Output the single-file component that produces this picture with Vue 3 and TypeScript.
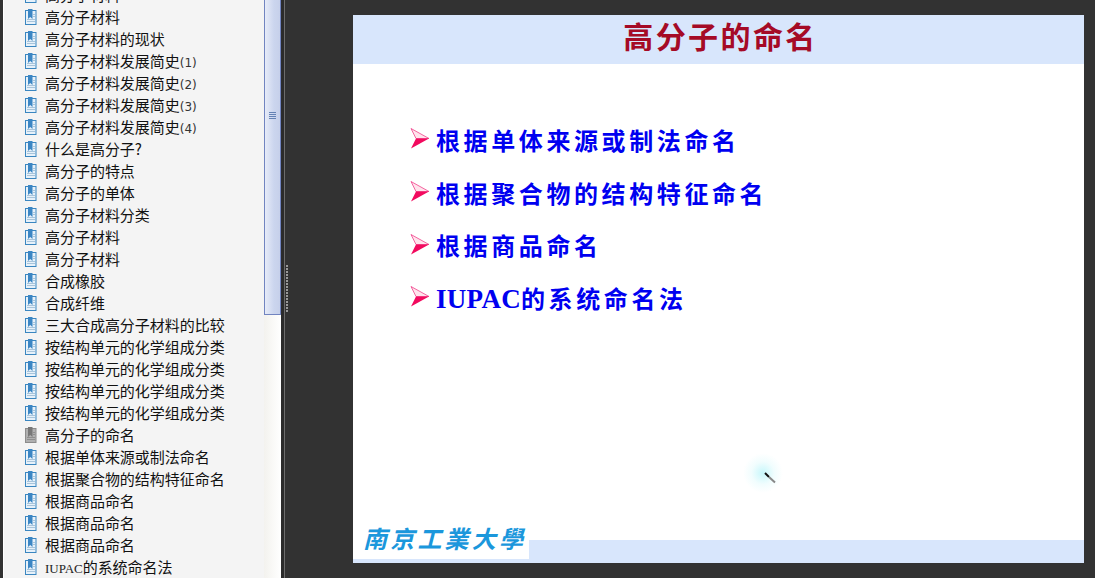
<script setup lang="ts">
interface Bookmark {
  title: string;
  suffix?: string;
  active?: boolean;
}

const bookmarks: Bookmark[] = [
  { title: '高分子材料' },
  { title: '高分子材料' },
  { title: '高分子材料的现状' },
  { title: '高分子材料发展简史', suffix: '(1)' },
  { title: '高分子材料发展简史', suffix: '(2)' },
  { title: '高分子材料发展简史', suffix: '(3)' },
  { title: '高分子材料发展简史', suffix: '(4)' },
  { title: '什么是高分子?' },
  { title: '高分子的特点' },
  { title: '高分子的单体' },
  { title: '高分子材料分类' },
  { title: '高分子材料' },
  { title: '高分子材料' },
  { title: '合成橡胶' },
  { title: '合成纤维' },
  { title: '三大合成高分子材料的比较' },
  { title: '按结构单元的化学组成分类' },
  { title: '按结构单元的化学组成分类' },
  { title: '按结构单元的化学组成分类' },
  { title: '按结构单元的化学组成分类' },
  { title: '高分子的命名', active: true },
  { title: '根据单体来源或制法命名' },
  { title: '根据聚合物的结构特征命名' },
  { title: '根据商品命名' },
  { title: '根据商品命名' },
  { title: '根据商品命名' },
  { title: '的系统命名法' },
];

const points = ['根据单体来源或制法命名', '根据聚合物的结构特征命名', '根据商品命名', '的系统命名法'];
</script>

<template>
  <div class="viewer">
    <aside class="sidebar">
      <ul class="tree">
        <li v-for="(item, i) in bookmarks" :key="i" class="tree-row">
          <svg class="page-icon" :class="{ active: item.active }" width="12" height="16" viewBox="0 0 12 16">
            <rect class="sheet" x="0.5" y="1.5" width="10.5" height="14" />
            <path class="lines" d="M8 5.5h2M8 7.5h2M2 10.5h8M2 12.5h8" />
            <path class="mark" d="M3 0h4.5v10L5.2 8 3 10z" />
          </svg>
          <span class="tree-label">
            <span v-if="i === bookmarks.length - 1" class="latin">IUPAC</span>{{ item.title }}<span v-if="item.suffix" class="num">{{ item.suffix }}</span>
          </span>
        </li>
      </ul>
      <div class="scrollbar">
        <div class="thumb">
          <span class="grip"></span>
        </div>
      </div>
    </aside>

    <div class="splitter">
      <span class="dots"></span>
    </div>

    <main class="stage">
      <section class="slide">
        <header class="slide-head">高分子的命名</header>
        <ul class="points">
          <li v-for="(point, i) in points" :key="i" class="point">
            <svg class="arrow" width="20" height="22" viewBox="0 0 20 22">
              <path d="M1 0.5 19 10.5 6 10.5z" fill="#ffe3ec" stroke="#f0408a" stroke-width="0.8" />
              <path d="M1 20.5 19 10.5 6 10.5z" fill="#f20a5e" />
            </svg>
            <span class="point-text"><span v-if="i === points.length - 1" class="latin-bold">IUPAC</span>{{ point }}</span>
          </li>
        </ul>
        <footer class="slide-foot">
          <div class="logo">南京工業大學</div>
        </footer>
        <div class="pointer">
          <svg width="16" height="16" viewBox="0 0 16 16">
            <path d="M2 2 L6 6" stroke="#111" stroke-width="2" />
            <path d="M6 6 L12 11.5" stroke="#888" stroke-width="2" />
          </svg>
        </div>
      </section>
    </main>
  </div>
</template>

<style scoped>
.viewer {
  display: flex;
  width: 1095px;
  height: 578px;
  overflow: hidden;
  background: #323232;
}

.sidebar {
  display: flex;
  flex: none;
  width: 278px;
  height: 578px;
  margin-left: 3px;
  background: #f4f4f4;
  border-left: 1px solid #fff;
  box-sizing: border-box;
}

.tree {
  flex: 1;
  margin: -16px 0 0;
  padding: 0 0 0 21px;
  list-style: none;
  overflow: hidden;
}

.tree-row {
  display: flex;
  align-items: center;
  height: 22px;
  gap: 8px;
  font-family: "Noto Sans CJK SC", sans-serif;
  font-size: 15px;
  color: #111;
  white-space: nowrap;
}

.page-icon {
  flex: none;
}

.tree-label {
  margin-top: -1px;
  letter-spacing: -0.03px;
}

.sheet {
  fill: #e6f1fa;
  stroke: #3a86c0;
}

.lines {
  fill: none;
  stroke: #a8c4da;
  stroke-width: 1;
}

.mark {
  fill: #3b86c4;
}

.page-icon.active .sheet {
  fill: #b0b0b0;
  stroke: #8c8c8c;
}

.page-icon.active .lines {
  stroke: #8e8e8e;
}

.page-icon.active .mark {
  fill: #777;
}

.latin {
  font-family: "Liberation Serif", serif;
  font-size: 13px;
  color: #222;
}

.num {
  font-family: "DejaVu Sans", sans-serif;
  font-size: 12px;
  color: #333;
}

.scrollbar {
  flex: none;
  width: 17px;
  background: linear-gradient(90deg, #f3f2ee, #fff);
}

.thumb {
  display: flex;
  justify-content: center;
  height: 316px;
  margin-top: -1px;
  padding-top: 112px;
  box-sizing: border-box;
  background: linear-gradient(90deg, #e6ebf8, #cbd5ee 60%, #c6d0ea);
  border: 1px solid #7184c0;
}

.grip {
  display: block;
  width: 7px;
  height: 8px;
  background: repeating-linear-gradient(#6482b4 0 1px, transparent 1px 2px);
}

.splitter {
  display: flex;
  flex: none;
  align-items: center;
  width: 72px;
  box-sizing: border-box;
  background: linear-gradient(90deg, #2b2b2b 0 3px, #6c6c6c 3px 4px, #323232 4px);
}

.dots {
  display: block;
  width: 3px;
  height: 48px;
  margin-left: 5px;
  margin-top: -1px;
  background: radial-gradient(circle at 1px 1px, #999 1px, transparent 1px) 0 0 / 3px 3px;
}

.stage {
  flex: 1;
  padding: 15px 11px 15px 0;
  min-width: 0;
}

.slide {
  position: relative;
  display: flex;
  flex-direction: column;
  height: 548px;
  background: #fff;
}

.slide-head {
  flex: none;
  height: 49px;
  box-sizing: border-box;
  padding-left: 4px;
  background: #d8e6fc;
  color: #a50a26;
  font-family: "Noto Sans CJK SC", sans-serif;
  font-size: 30px;
  font-weight: 700;
  line-height: 41px;
  letter-spacing: 2.4px;
  text-align: center;
}

.points {
  flex: 1;
  margin: 0;
  padding: 49px 0 0 57px;
  list-style: none;
}

.point {
  display: flex;
  align-items: center;
  gap: 6px;
  height: 52.7px;
}

.point-text {
  color: #0000f0;
  font-family: "Noto Sans CJK SC", sans-serif;
  font-size: 24px;
  font-weight: 700;
  letter-spacing: 3.6px;
  white-space: nowrap;
}

.latin-bold {
  font-family: "Liberation Serif", serif;
  font-size: 27px;
  letter-spacing: 0.3px;
}

.slide-foot {
  position: relative;
  flex: none;
  height: 23px;
  background: #d8e6fc;
}

.logo {
  position: absolute;
  left: 0;
  bottom: 4px;
  width: 176px;
  height: 42px;
  box-sizing: border-box;
  padding-left: 10px;
  background: #fff;
  color: #1b97dc;
  font-family: "Noto Sans CJK SC", sans-serif;
  font-size: 24px;
  font-weight: 700;
  font-style: italic;
  letter-spacing: 3.2px;
  line-height: 42px;
  white-space: nowrap;
}

.pointer {
  position: absolute;
  left: 390px;
  top: 438px;
  width: 40px;
  height: 40px;
  display: flex;
  align-items: center;
  justify-content: center;
  background: radial-gradient(circle at 50% 50%, rgba(185, 245, 250, 0.8), rgba(220, 250, 252, 0.4) 40%, rgba(255, 255, 255, 0) 70%);
}

.pointer svg {
  margin: 12px 0 0 16px;
}
</style>

<style>
html,
body {
  margin: 0;
  background: #323232;
}
</style>
